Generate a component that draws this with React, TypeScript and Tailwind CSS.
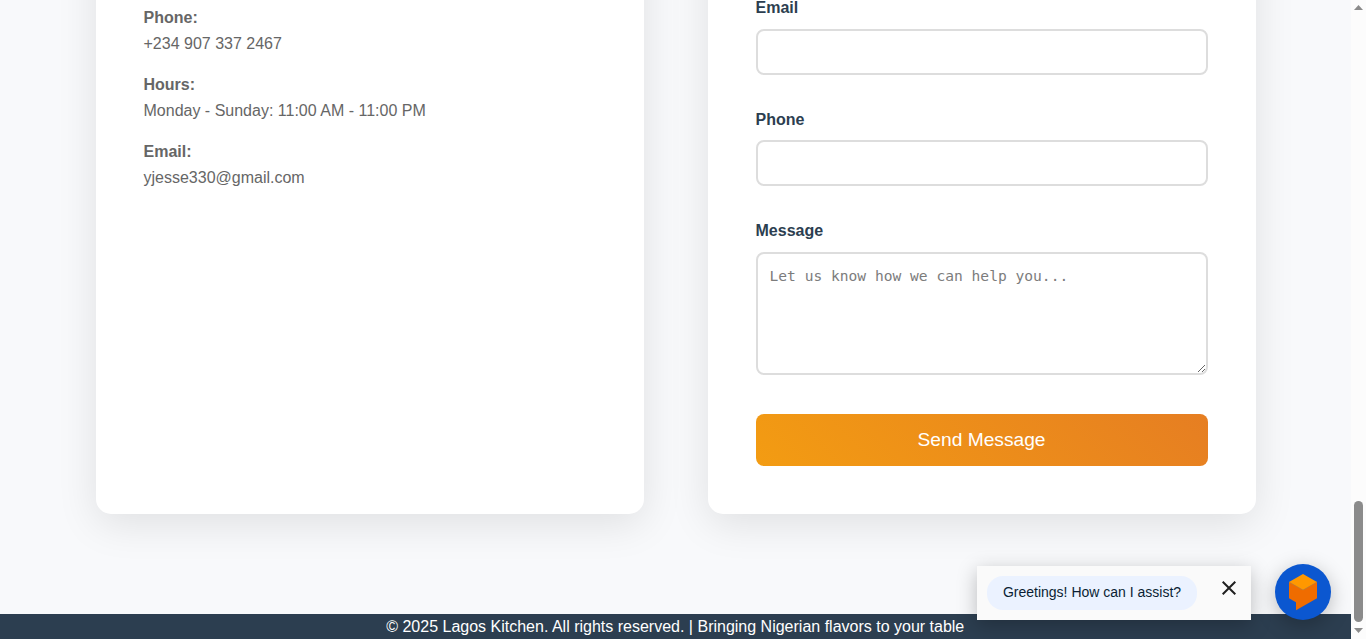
import type { ReactNode } from 'react';

function InfoItem({ label, children }: { label: string; children: ReactNode }) {
  return (
    <p className="mb-4 text-[#666666]">
      <strong className="font-bold">{label}</strong>
      <br />
      {children}
    </p>
  );
}

function Field({ label, id }: { label: string; id: string }) {
  return (
    <div className="mb-8">
      <label htmlFor={id} className="mb-2 block font-bold text-[#2c3e50]">
        {label}
      </label>
      <input id={id} className="block h-[46px] w-full rounded-lg border-2 border-[#dddddd] bg-white px-3 outline-none" />
    </div>
  );
}

function ContactInfo() {
  return (
    <div className="h-[620px] rounded-[15px] bg-white px-12 pt-[111px] shadow-[0_10px_40px_rgba(0,0,0,0.1)]">
      <InfoItem label="Phone:">+234 907 337 2467</InfoItem>
      <InfoItem label="Hours:">Monday - Sunday: 11:00 AM - 11:00 PM</InfoItem>
      <InfoItem label="Email:">yjesse330@gmail.com</InfoItem>
    </div>
  );
}

function ContactForm() {
  return (
    <form className="flex h-[620px] flex-col justify-end rounded-[15px] bg-white p-12 shadow-[0_10px_40px_rgba(0,0,0,0.1)]">
      <Field label="Email" id="email" />
      <Field label="Phone" id="phone" />
      <div className="mb-[39px]">
        <label htmlFor="message" className="mb-2 block font-bold text-[#2c3e50]">
          Message
        </label>
        <textarea
          id="message"
          placeholder="Let us know how we can help you..."
          className="block h-[123px] w-full resize-y rounded-lg border-2 border-[#dddddd] bg-white p-3 font-['DejaVu_Sans_Mono',monospace] text-[14.6px] leading-[19px] outline-none placeholder:text-[#7c7c7c]"
        />
      </div>
      <button
        type="button"
        className="h-[52px] w-full shrink-0 rounded-lg bg-[linear-gradient(45deg,#f39c12,#e67e22)] pb-px text-[19.2px] leading-[22px] text-white"
      >
        Send Message
      </button>
    </form>
  );
}

function ChatWidget() {
  return (
    <div className="absolute right-[35px] bottom-[19px] flex items-end gap-6">
      <div className="flex h-[54px] w-[274px] items-center bg-[#fafafa] pl-[10px] shadow-[0_5px_20px_rgba(0,0,0,0.25)]">
        <div className="flex h-[34px] w-[210px] items-center justify-center rounded-2xl bg-[#ebf2ff] pb-0.5 text-[14px] leading-5 text-[#0a1e33]">
          Greetings! How can I assist?
        </div>
        <svg className="mb-[10px] ml-[25px] h-[14px] w-[14px]" viewBox="0 0 14 14" fill="none" stroke="#1f1f1f" strokeWidth="2">
          <path d="M.7.7 13.3 13.3M13.3.7.7 13.3" />
        </svg>
      </div>
      <div className="h-14 w-14 rounded-full bg-[#0b57d0] shadow-[0_5px_20px_rgba(0,0,0,0.25)]">
        <svg viewBox="0 0 56 56" className="h-14 w-14">
          <path d="M14 18 28 26 42 18V34.3L21 46.3V38.3L14 34.3Z" fill="#ef6c00" />
          <path d="M28 10 42 18 28 26 14 18Z" fill="#ff9800" />
          <path d="M14 18 28 26 42 18" stroke="#d18425" strokeWidth=".5" fill="none" />
        </svg>
      </div>
    </div>
  );
}

function Scrollbar() {
  return (
    <div className="relative z-10 flex h-full w-[15px] shrink-0 flex-col items-center bg-[#fcfcfc] pr-px">
      <svg className="mt-[5px] h-[5px] w-[9px] shrink-0" viewBox="0 0 9 5" fill="#8b8b8b">
        <path d="M4.5 0 9 5H0Z" />
      </svg>
      <div className="mt-[491px] h-[121px] w-[9px] shrink-0 rounded-full bg-[#8b8b8b]" />
      <svg className="mt-[6px] h-[5px] w-[9px] shrink-0" viewBox="0 0 9 5" fill="#8b8b8b">
        <path d="M0 0H9L4.5 5Z" />
      </svg>
    </div>
  );
}

export default function App() {
  return (
    <div className="relative flex h-[639px] w-[1366px] overflow-hidden font-['Liberation_Sans',Arial,sans-serif] text-base leading-[25.6px]">
      <div className="flex min-w-0 flex-1 flex-col justify-end overflow-hidden bg-[#f8f9fb]">
        <main className="mx-auto grid w-[1160px] shrink-0 grid-cols-2 gap-16 pb-[100px]">
          <ContactInfo />
          <ContactForm />
        </main>
        <footer className="h-[25px] shrink-0 bg-[#2c3e50] pr-[0.5px] text-center text-white">
          © 2025 Lagos Kitchen. All rights reserved. | Bringing Nigerian flavors to your table
        </footer>
      </div>
      <Scrollbar />
      <ChatWidget />
    </div>
  );
}
